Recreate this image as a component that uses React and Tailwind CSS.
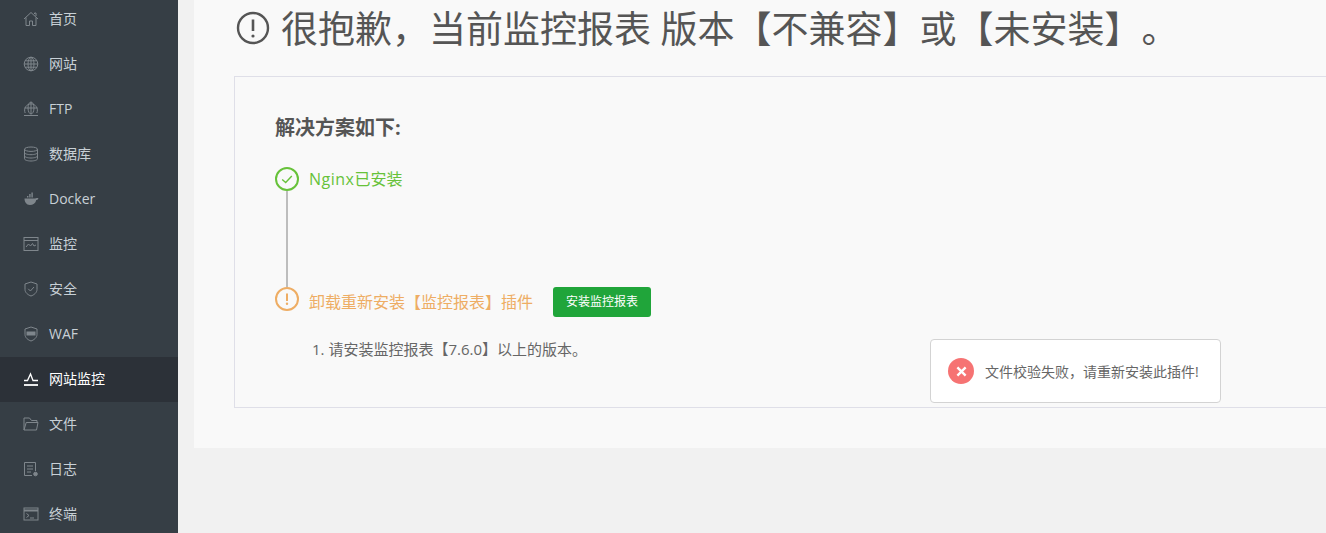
const FONT = 'font-["Open_Sans","Noto_Sans_CJK_SC",sans-serif]'
const COMMA = '\uFF0C'

const HomeIcon = () => (
  <svg viewBox="0 0 16 16" className="w-4 h-4" fill="none" stroke="currentColor" strokeWidth="1">
    <path d="M1 8 8 1.5 15 8M3 6.5V14.5H6.5V10H9.5V14.5H13V6.5M11.5 3V2H13V5" />
  </svg>
)
const GlobeIcon = () => (
  <svg viewBox="0 0 16 16" className="w-4 h-4" fill="none" stroke="currentColor" strokeWidth="1">
    <circle cx="8" cy="8" r="6.8" />
    <ellipse cx="8" cy="8" rx="3" ry="6.8" />
    <path d="M1.2 8H14.8M2 4.8H14M2 11.2H14M8 1V15" />
  </svg>
)
const FtpIcon = () => (
  <svg viewBox="0 0 16 16" className="w-4 h-4" fill="none" stroke="currentColor" strokeWidth="1">
    <path d="M2.2 12A6.4 6.4 0 1 1 13.8 12" />
    <ellipse cx="8" cy="7" rx="3" ry="6" />
    <path d="M1.5 7H14.5M8 1V13M1 14.5H15" />
  </svg>
)
const DbIcon = () => (
  <svg viewBox="0 0 16 16" className="w-4 h-4" fill="none" stroke="currentColor" strokeWidth="1">
    <ellipse cx="8" cy="3.2" rx="6.5" ry="2.2" />
    <path d="M1.5 3.2V12.8C1.5 14 4.4 15 8 15S14.5 14 14.5 12.8V3.2M1.5 6.5C1.5 7.7 4.4 8.7 8 8.7S14.5 7.7 14.5 6.5M1.5 9.8C1.5 11 4.4 12 8 12S14.5 11 14.5 9.8" />
  </svg>
)
const DockerIcon = () => (
  <svg viewBox="0 0 16 16" className="w-4 h-4" fill="currentColor">
    <path d="M1.5 7.5H12.2C12.6 7 13.8 6.6 15.5 7.2 15 8.6 14 9 13.3 9 12.6 12.4 10 14 6.8 14 3.4 14 1.5 11 1.5 7.5Z" />
    <path d="M6.2 3H7.6V6.5H6.2ZM8.4 1.5H9.8V6.5H8.4ZM4 5H5.4V6.5H4Z" />
  </svg>
)
const MonitorIcon = () => (
  <svg viewBox="0 0 16 16" className="w-4 h-4" fill="none" stroke="currentColor" strokeWidth="1">
    <rect x="1" y="1.5" width="14" height="13" />
    <path d="M1 4.5H15M3 11 5.5 8 7.5 10 9.5 7.5 11 10 13 9" />
  </svg>
)
const ShieldIcon = () => (
  <svg viewBox="0 0 16 16" className="w-4 h-4" fill="none" stroke="currentColor" strokeWidth="1">
    <path d="M8 1 14 3V8.5C14 11.6 11 14 8 15 5 14 2 11.6 2 8.5V3Z" />
    <path d="M5.2 7.8 7.4 10 11 6" />
  </svg>
)
const WafIcon = () => (
  <svg viewBox="0 0 16 16" className="w-4 h-4" fill="none" stroke="currentColor" strokeWidth="1">
    <path d="M8 1 14 3V8.5C14 11.6 11 14 8 15 5 14 2 11.6 2 8.5V3Z" />
    <rect x="4" y="6" width="8" height="3" fill="currentColor" />
  </svg>
)
const SiteMonitorIcon = () => (
  <svg viewBox="0 0 16 16" className="w-4 h-4" fill="none" stroke="currentColor" strokeWidth="1.3">
    <path d="M1 9.5H4.5L7.5 3 10 9.5H15" />
    <path d="M1 14H15" strokeWidth="1.8" />
  </svg>
)
const FolderIcon = () => (
  <svg viewBox="0 0 16 16" className="w-4 h-4" fill="none" stroke="currentColor" strokeWidth="1">
    <path d="M1 14V2H6.5L8.5 4.5H14V6.5M1 14H13.5L15 6.5H3.2L1 14Z" />
  </svg>
)
const LogIcon = () => (
  <svg viewBox="0 0 16 16" className="w-4 h-4" fill="none" stroke="currentColor" strokeWidth="1">
    <path d="M9 14.5H1.5V1.5H12.5V10M4 5H10M4 8H10M4 11H8" />
    <circle cx="12.5" cy="13" r="1.8" fill="currentColor" />
  </svg>
)
const TerminalIcon = () => (
  <svg viewBox="0 0 16 16" className="w-4 h-4" fill="none" stroke="currentColor" strokeWidth="1">
    <rect x="1" y="2" width="14" height="12" />
    <path d="M1 4.5H15" strokeWidth="2" />
    <path d="M3.5 7.5 6 9.5 3.5 11.5M7 12H11" />
  </svg>
)

const MENU = [
  { label: '首页', Icon: HomeIcon },
  { label: '网站', Icon: GlobeIcon },
  { label: 'FTP', Icon: FtpIcon },
  { label: '数据库', Icon: DbIcon },
  { label: 'Docker', Icon: DockerIcon },
  { label: '监控', Icon: MonitorIcon },
  { label: '安全', Icon: ShieldIcon },
  { label: 'WAF', Icon: WafIcon },
  { label: '网站监控', Icon: SiteMonitorIcon, active: true },
  { label: '文件', Icon: FolderIcon },
  { label: '日志', Icon: LogIcon },
  { label: '终端', Icon: TerminalIcon },
]

const Sidebar = () => (
  <aside className="w-[178px] h-full shrink-0 overflow-hidden bg-[#363e45]">
    <ul className="-mt-[3px]">
      {MENU.map(({ label, Icon, active }) => (
        <li
          key={label}
          className={
            active
              ? 'h-[45px] pb-[2px] flex items-center pl-[23px] gap-[10px] text-[14px] bg-[#2c3138] text-white'
              : 'h-[45px] pb-[2px] flex items-center pl-[23px] gap-[10px] text-[14px] text-[#c8d0d6]'
          }
        >
          <span className={active ? 'text-white' : 'text-[#7f868c]'}>
            <Icon />
          </span>
          {label}
        </li>
      ))}
    </ul>
  </aside>
)

export default function App() {
  return (
    <div className={`${FONT} [text-spacing-trim:space-all] relative flex h-screen overflow-hidden bg-[#f1f1f1]`}>
      <Sidebar />
      <main className="flex-1 min-w-0 pl-[16px]">
        <div className="h-[448px] bg-[#f9f9f9] pl-[40px] overflow-hidden">
          <div className="h-[76px] flex items-center pb-[20px] pl-[2px] gap-[11px] text-[#555] whitespace-nowrap">
            <svg viewBox="0 0 34 34" className="w-[34px] h-[34px] shrink-0" fill="none" stroke="#555" strokeWidth="2.4">
              <circle cx="17" cy="17" r="15" />
              <path d="M17 8.5V20" strokeWidth="2.6" />
              <circle cx="17" cy="25" r="1.6" fill="#555" stroke="none" />
            </svg>
            <h1 className="text-[37px] leading-none font-normal">很抱歉{COMMA}当前监控报表 版本【不兼容】或【未安装】。</h1>
          </div>
          <section className="h-[332px] border border-r-0 border-[#dfdfe8] pl-[40px] pt-[38px]">
            <h2 className="text-[20px] leading-[26px] font-bold text-[#555]">解决方案如下:</h2>
            <div className="mt-[26px] flex">
              <div className="flex flex-col items-center w-[24px]">
                <span className="w-[24px] h-[24px] rounded-full border-2 border-[#67c23a] flex items-center justify-center">
                  <svg viewBox="0 0 16 16" className="w-[14px] h-[14px]" fill="none" stroke="#67c23a" strokeWidth="1.6">
                    <path d="M2.5 8.5 6.5 12 13.5 4.5" />
                  </svg>
                </span>
                <span className="w-[2px] h-[96px] bg-[#bdbdbd]" />
                <span className="w-[24px] h-[24px] rounded-full border-2 border-[#eead64] flex items-center justify-center text-[#eead64]">
                  <svg viewBox="0 0 16 16" className="w-[16px] h-[16px]" fill="currentColor">
                    <rect x="7" y="2.5" width="2" height="7.5" />
                    <circle cx="8" cy="12.8" r="1.2" />
                  </svg>
                </span>
              </div>
              <div className="ml-[10px] flex-1">
                <p className="h-[24px] flex items-center text-[16px] text-[#67c23a]">
                  <span className="tracking-[0.5px]">Nginx</span>已安装
                </p>
                <div className="mt-[96px] h-[30px] flex items-center">
                  <span className="text-[16px] text-[#eead64]">卸载重新安装【监控报表】插件</span>
                  <button className="ml-[20px] w-[98px] h-[30px] rounded-[3px] bg-[#20a53a] text-white text-[12px]">
                    安装监控报表
                  </button>
                </div>
                <p className="mt-[22px] ml-[3px] text-[15px] leading-[20px] text-[#666]">1. 请安装监控报表【7.6.0】以上的版本。</p>
              </div>
            </div>
          </section>
        </div>
      </main>
      <div className="absolute left-[930px] top-[339px] w-[291px] h-[64px] bg-white border border-[#d3d3d3] rounded-[4px] flex items-center pl-[17px]">
        <span className="w-[26px] h-[26px] rounded-full bg-[#f67373] flex items-center justify-center">
          <svg viewBox="0 0 12 12" className="w-[11px] h-[11px]" stroke="#fff" strokeWidth="2.6">
            <path d="M1.5 1.5 10.5 10.5M10.5 1.5 1.5 10.5" />
          </svg>
        </span>
        <span className="ml-[11px] text-[14px] text-[#666] whitespace-nowrap">文件校验失败{COMMA}请重新安装此插件!</span>
      </div>
    </div>
  )
}
